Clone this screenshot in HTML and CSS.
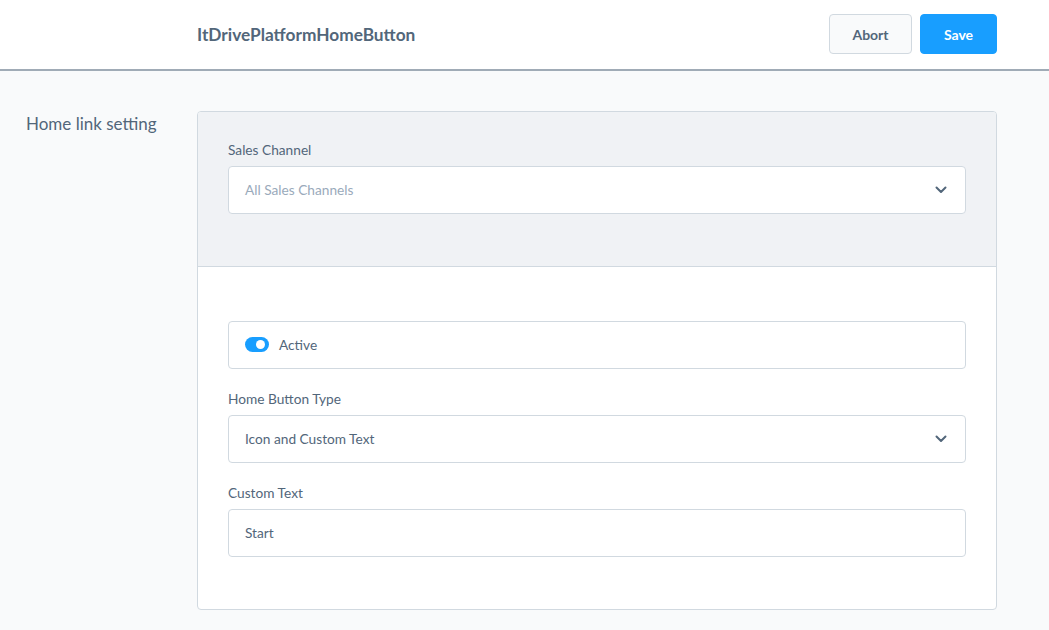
FILE: index.html
```html
<!DOCTYPE html>
<html lang="en">
<head>
<meta charset="utf-8">
<title>ItDrivePlatformHomeButton</title>
<link rel="stylesheet" href="styles.css">
</head>
<body>
<header class="topbar">
  <div class="topbar-inner">
    <h1 class="title">ItDrivePlatformHomeButton</h1>
    <div class="actions">
      <button class="btn btn-default">Abort</button>
      <button class="btn btn-primary">Save</button>
    </div>
  </div>
</header>
<main class="content">
  <div class="side">
    <h2 class="side-title">Home link setting</h2>
  </div>
  <section class="card">
    <div class="card-head">
      <div class="field">
        <label class="field-label">Sales Channel</label>
        <div class="control">
          <span class="placeholder">All Sales Channels</span>
          <svg class="chevron" width="12" height="8" viewBox="0 0 12 8"><path d="M1.5 1.5 L6 6 L10.5 1.5" fill="none" stroke="#52667a" stroke-width="2" stroke-linecap="round" stroke-linejoin="round"/></svg>
        </div>
      </div>
    </div>
    <div class="card-body">
      <div class="field">
        <div class="control switch-box">
          <span class="switch"><span class="knob"></span></span>
          <span class="switch-label">Active</span>
        </div>
      </div>
      <div class="field">
        <label class="field-label">Home Button Type</label>
        <div class="control">
          <span class="value">Icon and Custom Text</span>
          <svg class="chevron" width="12" height="8" viewBox="0 0 12 8"><path d="M1.5 1.5 L6 6 L10.5 1.5" fill="none" stroke="#52667a" stroke-width="2" stroke-linecap="round" stroke-linejoin="round"/></svg>
        </div>
      </div>
      <div class="field">
        <label class="field-label">Custom Text</label>
        <div class="control">
          <span class="value">Start</span>
        </div>
      </div>
    </div>
  </section>
</main>
</body>
</html>
```

FILE: styles.css
```css
* { box-sizing: border-box; }
html, body { margin: 0; padding: 0; }
body {
  background: #f9fafb;
  font-family: "Lato", "Open Sans", sans-serif;
  color: #52667a;
  width: 1049px;
  height: 630px;
  overflow: hidden;
}
.topbar {
  background: #fff;
  height: 71px;
  border-bottom: 2px solid #a0abb6;
}
.topbar-inner {
  width: 800px;
  margin-left: 197px;
  height: 69px;
  display: flex;
  align-items: center;
  justify-content: space-between;
}
.title {
  margin: 0;
  font-size: 17.3px;
  font-weight: 700;
  color: #52667a;
}
.actions {
  display: flex;
  gap: 8px;
  margin-bottom: 1px;
}
.btn {
  height: 40px;
  border-radius: 4px;
  font-family: inherit;
  font-size: 14px;
  font-weight: 700;
  padding: 0;
  border: 1px solid;
  cursor: pointer;
}
.btn-default {
  background: #f9fafb;
  border-color: #d1d9e0;
  color: #52667a;
  width: 83px;
}
.btn-primary {
  background: #189eff;
  border-color: #189eff;
  color: #fff;
  width: 77px;
}
.content {
  display: flex;
  padding-top: 40px;
}
.side {
  width: 197px;
  padding-left: 26px;
}
.side-title {
  margin: 0;
  padding-top: 1px;
  font-size: 17px;
  font-weight: 400;
  line-height: 24px;
  color: #52667a;
}
.card {
  width: 800px;
  border: 1px solid #d1d9e0;
  border-radius: 4px;
  background: #fff;
  overflow: hidden;
}
.card-head {
  background: #f0f2f5;
  padding: 30px 30px 30px;
  border-bottom: 1px solid #d1d9e0;
}
.card-body {
  padding: 54px 30px 30px;
}
.field {
  margin-bottom: 22px;
}
.field-label {
  display: block;
  font-size: 13.7px;
  line-height: 16px;
  margin-bottom: 8px;
  color: #52667a;
}
.control {
  height: 48px;
  border: 1px solid #d1d9e0;
  border-radius: 4px;
  background: #fff;
  display: flex;
  align-items: center;
  padding: 0 18px 1px 16px;
  font-size: 13.7px;
}
.placeholder { color: #9aaabb; flex: 1; }
.value { color: #52667a; flex: 1; }
.chevron { display: block; }
.switch-box { gap: 10px; }
.switch {
  width: 24px;
  height: 15px;
  border-radius: 8px;
  background: #189eff;
  position: relative;
  display: block;
}
.knob {
  position: absolute;
  width: 9px;
  height: 9px;
  border-radius: 50%;
  background: #fff;
  top: 3px;
  right: 4px;
}
.switch-label { color: #52667a; }
```
